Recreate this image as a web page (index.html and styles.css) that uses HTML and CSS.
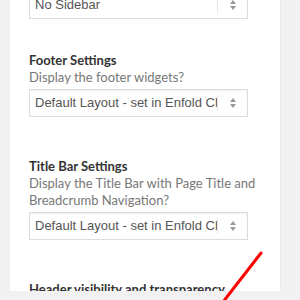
FILE: index.html
```html
<!DOCTYPE html>
<html lang="en">
<head>
  <meta charset="UTF-8">
  <meta name="viewport" content="width=device-width, initial-scale=1.0">
  <title>Layout Settings</title>
  <link rel="stylesheet" href="styles.css">
</head>
<body>
  <div class="panel">
    <div class="field first">
      <div class="select"><span class="value">No Sidebar</span><span class="arrows"></span></div>
    </div>
    <div class="field">
      <h3>Footer Settings</h3>
      <p class="desc">Display the footer widgets?</p>
      <div class="select"><span class="value">Default Layout - set in Enfold Child</span><span class="arrows"></span></div>
    </div>
    <div class="field">
      <h3>Title Bar Settings</h3>
      <p class="desc">Display the Title Bar with Page Title and Breadcrumb Navigation?</p>
      <div class="select"><span class="value">Default Layout - set in Enfold Child</span><span class="arrows"></span></div>
    </div>
    <div class="field">
      <h3>Header visibility and transparency</h3>
    </div>
  </div>
  <svg class="mark" width="300" height="300" viewBox="0 0 300 300">
    <path d="M261 253 L223 302" stroke="#f00" stroke-width="3" stroke-linecap="round" fill="none"/>
  </svg>
</body>
</html>
```

FILE: styles.css
```css
body { margin: 0; background: #f1f1f1; font-family: Lato, "Open Sans", sans-serif; overflow: hidden; }
.panel { margin: 0 19px 0 10px; background: #fff; border-right: 1px solid #e8e8e8; padding: 0 18px 40px 19px; height: 300px; box-sizing: border-box; }
.field { margin-top: 33px; }
.field.first { margin-top: -9px; }
.field + .field + .field { margin-top: 41px; }
h3 { margin: 0; font-size: 13px; line-height: 17px; font-weight: 700; color: #333; }
.desc { margin: 0 0 3px; font-size: 13px; line-height: 17px; color: #777; }
.select { width: 219px; height: 28px; box-sizing: border-box; border: 1px solid #ddd; box-shadow: inset 0 1px 2px rgba(0,0,0,0.07); display: flex; align-items: center; padding-left: 5px; background: #fff; }
.value { flex: 1; white-space: nowrap; overflow: hidden; font-family: "Liberation Sans", Arial, sans-serif; font-size: 13px; color: #555; border-right: 1px solid #e5e5e5; line-height: 16px; margin-right: 11px; }
.arrows { width: 8px; height: 12px; margin-right: 10px; position: relative; }
.arrows::before, .arrows::after { content: ""; position: absolute; left: 1px; border-left: 3px solid transparent; border-right: 3px solid transparent; }
.arrows::before { top: 1px; border-bottom: 4px solid #999; }
.arrows::after { bottom: 1px; border-top: 4px solid #999; }
.mark { position: absolute; left: 0; top: 0; pointer-events: none; }
```
